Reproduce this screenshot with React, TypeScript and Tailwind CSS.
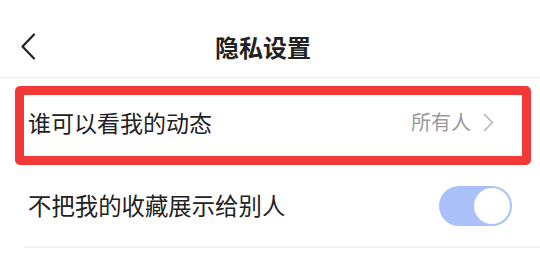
const font = { fontFamily: '"Noto Sans CJK SC", "Noto Sans", sans-serif' }

function BackIcon() {
  return (
    <svg width="16" height="27" viewBox="0 0 16 27" fill="none">
      <path d="M14 1.5 L2.5 13.5 L14 25.5" stroke="#222" strokeWidth="2.2" strokeLinecap="round" strokeLinejoin="round" />
    </svg>
  )
}

function ChevronRight() {
  return (
    <svg width="11" height="19" viewBox="0 0 11 19" fill="none">
      <path d="M1.5 1.5 L9.5 9.5 L1.5 17.5" stroke="#b5b5b5" strokeWidth="1.6" strokeLinecap="round" strokeLinejoin="round" />
    </svg>
  )
}

function Toggle() {
  return (
    <div className="flex h-[40px] w-[73px] items-center justify-end rounded-full bg-[#a9c1f8] p-[2px]">
      <div className="h-[36px] w-[36px] rounded-full bg-white" />
    </div>
  )
}

export default function App() {
  return (
    <div className="h-[255px] w-[540px] overflow-hidden bg-white" style={font}>
      <header className="flex h-[78px] items-center border-b border-[#f0f0f0] pl-5 pt-[16px]">
        <BackIcon />
        <h1 className="flex-1 pr-[50px] text-center text-[24px] font-bold text-[#222]">隐私设置</h1>
      </header>
      <div className="relative flex h-[88px] items-center justify-between pl-[28px] pr-[46px]">
        <span className="text-[23px] text-[#222]">谁可以看我的动态</span>
        <div className="flex items-center gap-[12px]">
          <span className="text-[20px] text-[#9a9a9a]">所有人</span>
          <ChevronRight />
        </div>
        <div className="absolute bottom-[1px] left-[15px] right-[9px] top-[8px] rounded-[5px] border-[9px] border-[#f33838]" />
      </div>
      <div className="ml-6 flex h-[82px] items-center justify-between border-b-2 border-[#f2f2f2] pl-[4px] pr-[28px]">
        <span className="text-[23.4px] text-[#222]">不把我的收藏展示给别人</span>
        <Toggle />
      </div>
    </div>
  )
}
